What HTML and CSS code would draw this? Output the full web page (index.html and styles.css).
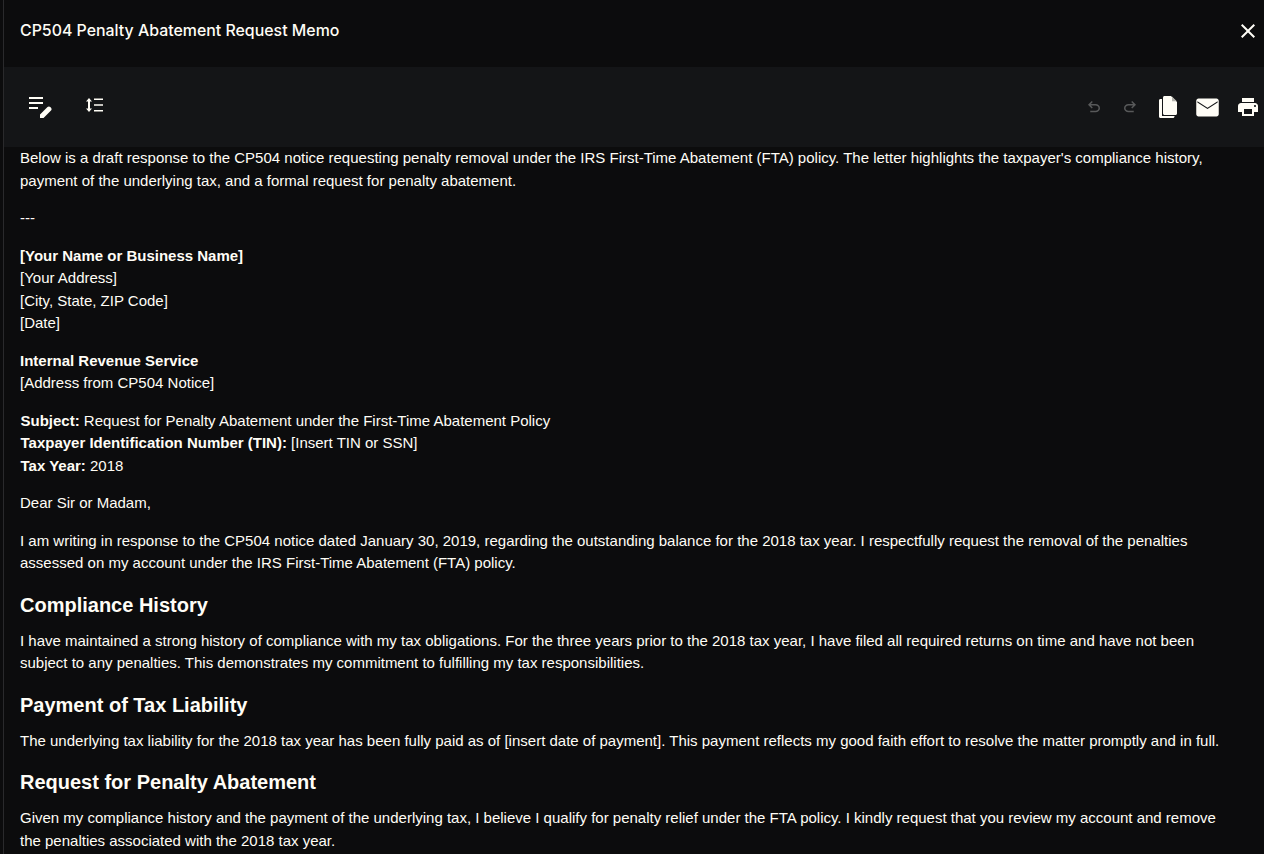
FILE: index.html
```html
<!DOCTYPE html>
<html lang="en">
<head>
  <meta charset="UTF-8">
  <title>CP504 Penalty Abatement Request Memo</title>
  <link rel="stylesheet" href="styles.css">
</head>
<body>
  <div class="modal">
    <div class="modal-header">
      <h1>CP504 Penalty Abatement Request Memo</h1>
      <svg class="close-icon" viewBox="0 0 24 24"><path d="M19 6.410 17.590 5 12 10.590 6.410 5 5 6.410 10.590 12 5 17.590 6.410 19 12 13.410 17.590 19 19 17.590 13.410 12z"/></svg>
    </div>

    <div class="toolbar">
      <div class="tools-left">
        <svg class="icon-note" viewBox="0 0 24 24"><path d="M1 2h14v2H1zm0 5h14v2H1zm0 5h9v2H1zm11 11v-3.500l7.500-7.500c.8-.8 2-.8 2.800 0l.7.7c.8.8.8 2 0 2.800L15.500 23z"/></svg>
        <svg class="icon-spacing" viewBox="0 0 18 14"><path d="M3 0l3 3.500H4v7h2L3 14l-3-3.500h2v-7H0zM8 .5h9v1.500H8zm0 5.700h9v1.500H8zM8 12h9v1.500H8z"/></svg>
      </div>
      <div class="tools-right">
        <svg class="icon-history" viewBox="0 0 24 24"><path d="M7 19v-2h7.100c1.050 0 1.960-.33 2.730-1 .77-.67 1.170-1.500 1.170-2.500s-.4-1.830-1.170-2.500c-.77-.67-1.680-1-2.730-1H7.800l2.600 2.600L9 14 4 9l5-5 1.400 1.400L7.800 8h6.300c1.620 0 3 .53 4.150 1.580C19.420 10.630 20 11.930 20 13.500s-.58 2.870-1.750 3.930C17.100 18.470 15.720 19 14.100 19z"/></svg>
        <svg class="icon-history flip" viewBox="0 0 24 24"><path d="M7 19v-2h7.100c1.050 0 1.960-.33 2.730-1 .77-.67 1.170-1.500 1.170-2.500s-.4-1.830-1.170-2.500c-.77-.67-1.680-1-2.730-1H7.800l2.600 2.600L9 14 4 9l5-5 1.400 1.400L7.800 8h6.300c1.620 0 3 .53 4.150 1.580C19.420 10.630 20 11.930 20 13.500s-.58 2.870-1.750 3.930C17.100 18.470 15.720 19 14.100 19z"/></svg>
        <svg class="icon-copy" viewBox="0 0 20 24">
          <path d="M1 5.500C1 4.700 1.600 4 2.500 4H4v17h12.500v.5c0 .8-.7 1.500-1.500 1.500H2.500C1.700 23 1 22.300 1 21.500z"/>
          <path d="M6.500 1H13l6 6v11.500c0 .8-.7 1.500-1.500 1.500h-11C5.700 20 5 19.300 5 18.500v-16C5 1.700 5.700 1 6.500 1z"/>
          <path class="fold" d="M14 1.500l4.800 4.800H14z"/>
        </svg>
        <svg class="icon-mail" viewBox="0 0 24 24"><path fill-rule="evenodd" d="M4 4h16c1.100 0 2 .9 2 2v12c0 1.100-.9 2-2 2H4c-1.100 0-2-.9-2-2V6c0-1.100.9-2 2-2zm-1 2.400v1.200l9 5.800 9-5.800V6.400l-9 5.800z"/></svg>
        <svg class="icon-print" viewBox="0 0 24 24"><path d="M19 8H5c-1.660 0-3 1.340-3 3v6h4v4h12v-4h4v-6c0-1.660-1.340-3-3-3zm-3 11H8v-5h8v5zm3-7c-.55 0-1-.45-1-1s.45-1 1-1 1 .45 1 1-.45 1-1 1zm-1-9H6v4h12V3z"/></svg>
      </div>
    </div>

    <div class="memo">
      <p>Below is a draft response to the CP504 notice requesting penalty removal under the IRS First-Time Abatement (FTA) policy. The letter highlights the taxpayer's compliance history, payment of the underlying tax, and a formal request for penalty abatement.</p>
      <p>---</p>
      <p><strong>[Your Name or Business Name]</strong><br>[Your Address]<br>[City, State, ZIP Code]<br>[Date]</p>
      <p><strong>Internal Revenue Service</strong><br>[Address from CP504 Notice]</p>
      <p class="subject"><strong>Subject:</strong> Request for Penalty Abatement under the First-Time Abatement Policy<br><strong>Taxpayer Identification Number (TIN):</strong> [Insert TIN or SSN]<br><strong>Tax Year:</strong> 2018</p>
      <p>Dear Sir or Madam,</p>
      <p>I am writing in response to the CP504 notice dated January 30, 2019, regarding the outstanding balance for the 2018 tax year. I respectfully request the removal of the penalties assessed on my account under the IRS First-Time Abatement (FTA) policy.</p>
      <h2>Compliance History</h2>
      <p>I have maintained a strong history of compliance with my tax obligations. For the three years prior to the 2018 tax year, I have filed all required returns on time and have not been subject to any penalties. This demonstrates my commitment to fulfilling my tax responsibilities.</p>
      <h2>Payment of Tax Liability</h2>
      <p>The underlying tax liability for the 2018 tax year has been fully paid as of [insert date of payment]. This payment reflects my good faith effort to resolve the matter promptly and in full.</p>
      <h2>Request for Penalty Abatement</h2>
      <p>Given my compliance history and the payment of the underlying tax, I believe I qualify for penalty relief under the FTA policy. I kindly request that you review my account and remove the penalties associated with the 2018 tax year.</p>
    </div>
  </div>
</body>
</html>
```

FILE: styles.css
```css
html, body {
  height: 100%;
  margin: 0;
  overflow: hidden;
  background: #0c0c0d;
}

.modal {
  height: 854px;
  margin-left: 3px;
  border-left: 1px solid #2a2a2c;
  overflow: hidden;
  color: #fffdf6;
  font-family: "Liberation Sans", Arial, sans-serif;
  font-size: 15px;
  line-height: 22.5px;
}

.modal-header {
  height: 67px;
  display: flex;
  align-items: center;
  justify-content: space-between;
  padding: 0 4px 6px 16px;
  box-sizing: border-box;
}

h1 {
  margin: 2px 0 0;
  font-family: Inter, sans-serif;
  font-size: 15.9px;
  font-weight: 500;
}

.close-icon {
  width: 24px;
  height: 24px;
  fill: #fffdf6;
}

.toolbar {
  height: 80px;
  display: flex;
  align-items: center;
  justify-content: space-between;
  background: #141517;
}

.tools-left, .tools-right {
  display: flex;
  align-items: center;
}

.tools-left {
  padding-left: 24px;
}

.tools-right {
  margin-right: 4px;
}

.toolbar svg {
  fill: #fffdf6;
}

.icon-note { width: 24px; height: 24px; margin-right: 34px; }
.icon-spacing { width: 18px; height: 14px; margin-bottom: 4px; }
.toolbar .icon-history { width: 18px; height: 18px; margin-right: 18px; fill: #58595a; }
.toolbar .flip { transform: scaleX(-1); margin-right: 19px; }
.icon-copy { width: 20px; height: 24px; margin-right: 16px; }
.toolbar .fold { fill: #b5b4ae; }
.icon-mail { width: 27px; height: 27px; margin-right: 15px; }
.icon-print { width: 24px; height: 24px; }

.memo {
  padding: 0 24px 0 16px;
}

.memo p {
  margin: 0 0 15px;
}

.memo .subject {
  padding-left: .5px;
}

.memo strong {
  font-weight: 700;
}

h2 {
  margin: 16px 0 11px;
  font-size: 20px;
  font-weight: 700;
  line-height: 28px;
}
```
